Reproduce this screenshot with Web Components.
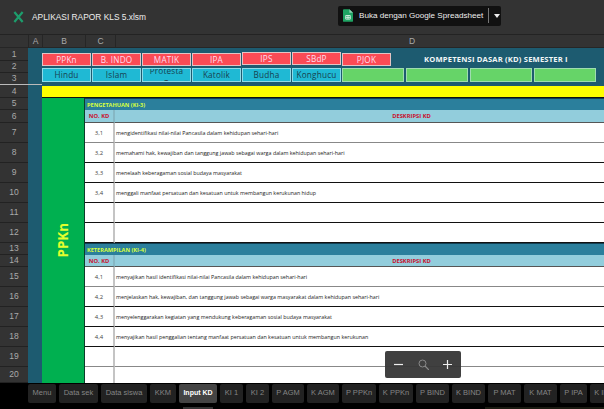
<!DOCTYPE html>
<html>
<head>
<meta charset="utf-8">
<title>APLIKASI RAPOR KLS 5.xlsm</title>
<style>
  html, body { margin: 0; height: 100%; background: #000; overflow: hidden; }
  body { display: flex; flex-direction: column; width: 604px; height: 409px; position: relative; font-family: "Open Sans", sans-serif; }
</style>
</head>
<body>
<viewer-bar name="APLIKASI RAPOR KLS 5.xlsm" action="Buka dengan Google Spreadsheet"></viewer-bar>
<rapor-sheet></rapor-sheet>
<sheet-tabs></sheet-tabs>
<zoom-control></zoom-control>

<script>
class ViewerBar extends HTMLElement {
  connectedCallback() {
    this.attachShadow({ mode: "open" });
    this.shadowRoot.innerHTML = `
      <style>
        :host {
          display: flex;
          align-items: center;
          height: 34px;
          flex: none;
          background: #333;
          border-bottom: 1px solid #232323;
          font-family: "Liberation Sans", sans-serif;
          color: #eee;
        }
        .logo { width: 11px; height: 12px; margin: 0 8px 0 13px; flex: none; }
        .name { font-size: 8.4px; width: 306px; flex: none; }
        .open {
          display: flex;
          align-items: center;
          width: 163px;
          height: 20px;
          margin-top: -3px;
          background: #111;
          border-radius: 2px;
          font-size: 8.1px;
          white-space: nowrap;
        }
        .open svg { width: 10px; height: 13px; margin: 0 6px 0 5px; flex: none; }
        .sep { width: 1px; height: 15px; background: #777; margin-left: 5px; flex: none; }
        .caret { width: 0; height: 0; border: 3px solid transparent; border-top: 4px solid #eee; border-bottom: 0; margin-left: 5px; }
      </style>
      <svg class="logo" viewBox="0 0 12 13">
        <path d="M1.5 1 L10.5 12 M10.5 1 L1.5 12" stroke="#1d9d6c" stroke-width="2.4" fill="none"/>
      </svg>
      <div class="name">${this.getAttribute("name")}</div>
      <div class="open">
        <svg viewBox="0 0 11 14">
          <path d="M1 0 H7 L11 4 V13 a1 1 0 0 1 -1 1 H1 a1 1 0 0 1 -1 -1 V1 a1 1 0 0 1 1 -1 Z" fill="#1fa463"/>
          <path d="M7 0 L11 4 H7 Z" fill="#8ed1b1"/>
          <path d="M3 7 H8 V11 H3 Z M3 9 H8 M5.5 7 V11" fill="none" stroke="#fff" stroke-width=".8"/>
        </svg>
        <span>${this.getAttribute("action")}</span>
        <i class="sep"></i>
        <i class="caret"></i>
      </div>
    `;
  }
}

class SubjectPill extends HTMLElement {
  connectedCallback() {
    this.attachShadow({ mode: "open" });
    this.shadowRoot.innerHTML = `
      <style>
        :host {
          display: block;
          box-sizing: border-box;
          width: var(--w, 49px);
          height: var(--h, 14px);
          margin-top: var(--top, 0);
          margin-right: 1px;
          flex: none;
          overflow: hidden;
          text-align: center;
          font-size: 8.2px;
          letter-spacing: .2px;
          word-break: break-all;
        }
        :host([kind="red"]) { --h: 13px; background: #fb4b55; color: #fde; border: 1px solid #e3c4c4; line-height: 11px; }
        :host([kind="cyan"]) { background: #1fb9d4; color: #17414f; border: 1px solid #8fdbe8; line-height: 12px; }
        :host([kind="tall"]) { background: #1fb9d4; color: #17414f; border: 1px solid #8fdbe8; line-height: 11px; padding: 0 6px; }
        :host([kind="tall"]) .in { margin-top: -4px; }
        :host([kind="green"]) { background: #66d468; border: 1px solid #9fdcb0; margin-right: 2px; }
      </style>
      <div class="in"><slot></slot></div>
    `;
  }
}

class RaporSheet extends HTMLElement {
  connectedCallback() {
    const heights = [13, 12, 12, 13, 12, 13, 20, 20, 20, 20, 20, 20, 12, 12, 20, 20, 20, 20, 20, 16];
    const ki3 = [
      ["3,1", "mengidentifikasi nilai-nilai Pancasila dalam kehidupan sehari-hari"],
      ["3,2", "memahami hak, kewajiban dan tanggung jawab sebagai warga dalam kehidupan sehari-hari"],
      ["3,3", "menelaah keberagaman sosial budaya masyarakat"],
      ["3,4", "menggali manfaat persatuan dan kesatuan untuk membangun kerukunan hidup"],
      ["", ""], ["", ""]
    ];
    const ki4 = [
      ["4,1", "menyajikan hasil identifikasi nilai-nilai Pancasila dalam kehidupan sehari-hari"],
      ["4,2", "menjelaskan hak, kewajiban, dan tanggung jawab sebagai warga masyarakat dalam kehidupan sehari-hari"],
      ["4,3", "menyelenggarakan kegiatan yang mendukung keberagaman sosial budaya masyarakat"],
      ["4,4", "menyajikan hasil penggalian tentang manfaat persatuan dan kesatuan untuk membangun kerukunan"],
      ["", ""], ["", ""]
    ];

    const rowNums = heights.map((h, i) =>
      `<div class="rownum${i === 2 ? " freeze" : ""}" style="grid-row:${i + 2}">${i + 1}</div>`).join("");

    const section = (title, rows, start) => {
      let out = `
        <div class="band" style="grid-row:${start}">${title}</div>
        <div class="hd no" style="grid-row:${start + 1}">NO. KD</div>
        <div class="hd desc" style="grid-row:${start + 1}">DESKRIPSI KD</div>`;
      rows.forEach((r, i) => {
        const grey = (start === 6 && i === 0) || (start === 14 && (i === 0 || i === 4));
        const last = start === 14 && i === 5;
        const cls = last ? "noline" : grey ? "grey" : "";
        out += `
          <div class="num ${cls}" style="grid-row:${start + 2 + i}">${r[0]}</div>
          <div class="txt ${cls}" style="grid-row:${start + 2 + i}">${r[1]}</div>`;
      });
      return out;
    };

    this.attachShadow({ mode: "open" });
    this.shadowRoot.innerHTML = `
      <style>
        :host {
          display: grid;
          flex: none;
          height: 348px;
          overflow: hidden;
          grid-template-columns: 28px 14px 43px 30px 1fr;
          grid-template-rows: 13px ${heights.map(h => h + "px").join(" ")};
          background: #1d5b70;
          font-family: "Open Sans", sans-serif;
        }
        .col {
          grid-row: 1;
          background: #333;
          color: #aaa;
          font: 8.5px/13px "Liberation Sans", sans-serif;
          text-align: center;
          border-left: 1px solid #262626;
          border-bottom: 1px solid #262626;
        }
        .col.d { text-align: left; padding-left: 293px; }
        .col.corner { border-left: 0; }
        .rownum {
          grid-column: 1;
          background: #333;
          color: #aaa;
          font: 8.5px/100% "Liberation Sans", sans-serif;
          display: flex;
          align-items: center;
          justify-content: center;
          border-bottom: 1px solid #222;
          box-sizing: border-box;
        }
        .freeze { border-bottom: 1px solid #bbb; }
        .freeze-a { grid-column: 2; grid-row: 4; border-bottom: 1px solid #bbb; }
        .head { grid-column: 3 / 6; grid-row: 2 / 5; display: flex; flex-direction: column; gap: 2px; padding-top: 5px; overflow: hidden; }
        .line { display: flex; }
        .title {
          flex: 1;
          color: #f2f7f8;
          font-weight: 700;
          font-size: 7.6px;
          line-height: 12px;
          letter-spacing: .18px;
          padding-left: 32px;
          white-space: nowrap;
        }
        .yellow { grid-column: 3 / 6; grid-row: 5; background: #ff0; margin-top: 1px; border-bottom: 1px solid #111; }
        .subject {
          grid-column: 3;
          grid-row: 6 / 22;
          background: #00b050;
          border-right: 1px solid #0b3d2a;
          display: flex;
          align-items: center;
          justify-content: center;
        }
        .subject span {
          writing-mode: vertical-rl;
          transform: rotate(180deg);
          color: #e2ff2e;
          font-size: 13.4px;
          font-weight: 700;
        }
        .band {
          grid-column: 4 / 6;
          background: #2b7f9c;
          color: #d8ff3c;
          font-size: 5.6px;
          font-weight: 700;
          line-height: 12px;
          padding-left: 2px;
          border-top: 1px solid #123f52;
          box-sizing: border-box;
        }
        .hd {
          background: #92cddc;
          color: #c8102e;
          font-size: 5.8px;
          font-weight: 700;
          text-align: center;
          line-height: 12px;
          border-bottom: 1px solid #555;
          box-sizing: border-box;
        }
        .no { grid-column: 4; border-right: 2px solid #86b7c4; }
        .desc { grid-column: 5; padding-left: 104px; }
        .num, .txt {
          background: #fff;
          color: #222;
          font-size: 5.35px;
          display: flex;
          align-items: center;
          border-bottom: 1px solid #111;
          box-sizing: border-box;
          white-space: nowrap;
        }
        .num { grid-column: 4; justify-content: center; border-right: 2px solid #c4c4c4; font-size: 5.9px; color: #444; }
        .txt { grid-column: 5; padding-left: 1px; }
        .grey { border-bottom-color: #888; }
        .noline { border-bottom: 0; }
      </style>
      <div class="col corner" style="grid-column:1"></div>
      <div class="col" style="grid-column:2">A</div>
      <div class="col" style="grid-column:3">B</div>
      <div class="col" style="grid-column:4">C</div>
      <div class="col d" style="grid-column:5">D</div>
      ${rowNums}
      <div class="freeze-a"></div>
      <div class="head">
        <div class="line">
          <subject-pill kind="red">PPKn</subject-pill>
          <subject-pill kind="red">B. INDO</subject-pill>
          <subject-pill kind="red">MATIK</subject-pill>
          <subject-pill kind="red">IPA</subject-pill>
          <subject-pill kind="red" style="--top:-1px">IPS</subject-pill>
          <subject-pill kind="red" style="--top:-1px">SBdP</subject-pill>
          <subject-pill kind="red">PJOK</subject-pill>
          <div class="title">KOMPETENSI DASAR (KD) SEMESTER I</div>
        </div>
        <div class="line">
          <subject-pill kind="cyan">Hindu</subject-pill>
          <subject-pill kind="cyan">Islam</subject-pill>
          <subject-pill kind="tall">Protestan</subject-pill>
          <subject-pill kind="cyan">Katolik</subject-pill>
          <subject-pill kind="cyan">Budha</subject-pill>
          <subject-pill kind="cyan">Konghucu</subject-pill>
          <subject-pill kind="green" style="--w:62px"></subject-pill>
          <subject-pill kind="green" style="--w:62px"></subject-pill>
          <subject-pill kind="green" style="--w:62px"></subject-pill>
          <subject-pill kind="green" style="--w:62px"></subject-pill>
        </div>
      </div>
      <div class="yellow"></div>
      <div class="subject"><span>PPKn</span></div>
      ${section("PENGETAHUAN (KI-3)", ki3, 6)}
      ${section("KETERAMPILAN (KI-4)", ki4, 14)}
    `;
  }
}

class SheetTabs extends HTMLElement {
  connectedCallback() {
    const tabs = [
      ["Menu", 28], ["Data sek", 39], ["Data siswa", 46], ["KKM", 26], ["Input KD", 38],
      ["KI 1", 23], ["KI 2", 23], ["P AGM", 32], ["K AGM", 32], ["P PPKn", 34], ["K PPKn", 34],
      ["P BIND", 33], ["K BIND", 33], ["P MAT", 33], ["K MAT", 33], ["P IPA", 27], ["K IPA", 27]
    ];
    this.attachShadow({ mode: "open" });
    this.shadowRoot.innerHTML = `
      <style>
        :host {
          display: flex;
          flex: none;
          gap: 3px;
          height: 26px;
          padding: 1px 0 0 28px;
          box-sizing: border-box;
          background: #000;
          overflow: hidden;
          position: relative;
          font-family: "Liberation Sans", sans-serif;
        }
        :host::after { content: ""; position: absolute; left: 485px; right: 0; bottom: 0; height: 2px; background: #1b1b12; }
        .tab {
          flex: none;
          height: 19px;
          box-sizing: border-box;
          background: #222;
          border-radius: 2px;
          color: #858585;
          font-size: 7.5px;
          line-height: 18px;
          text-align: center;
          white-space: nowrap;
        }
        .on { background: #444; color: #fff; font-weight: 700; font-size: 7px; position: relative; }
        .on::after { content: ""; position: absolute; left: 4px; right: 4px; top: 23px; height: 2px; background: #333; }
      </style>
      ${tabs.map(t => `<div class="tab${t[0] === "Input KD" ? " on" : ""}" style="width:${t[1]}px">${t[0]}</div>`).join("")}
    `;
  }
}

class ZoomControl extends HTMLElement {
  connectedCallback() {
    this.attachShadow({ mode: "open" });
    this.shadowRoot.innerHTML = `
      <style>
        :host {
          position: absolute;
          left: 385px;
          top: 351px;
          width: 76px;
          height: 27px;
          background: rgba(56, 56, 56, .96);
          border-radius: 2px;
          display: flex;
          align-items: center;
          justify-content: space-between;
          padding: 0 9px;
          box-sizing: border-box;
        }
        svg { display: block; flex: none; }
      </style>
      <svg width="9" height="9" viewBox="0 0 9 9"><path d="M0 4.5 H9" stroke="#eee" stroke-width="1.2"/></svg>
      <svg width="11" height="11" viewBox="0 0 11 11"><circle cx="4.5" cy="4.5" r="3.5" fill="none" stroke="#8a8a8a"/><path d="M7 7 L11 11" stroke="#8a8a8a" stroke-width="1.2"/></svg>
      <svg width="9" height="9" viewBox="0 0 9 9"><path d="M0 4.5 H9 M4.5 0 V9" stroke="#eee" stroke-width="1.2"/></svg>
    `;
  }
}

customElements.define("subject-pill", SubjectPill);
customElements.define("viewer-bar", ViewerBar);
customElements.define("rapor-sheet", RaporSheet);
customElements.define("sheet-tabs", SheetTabs);
customElements.define("zoom-control", ZoomControl);
</script>
</body>
</html>
